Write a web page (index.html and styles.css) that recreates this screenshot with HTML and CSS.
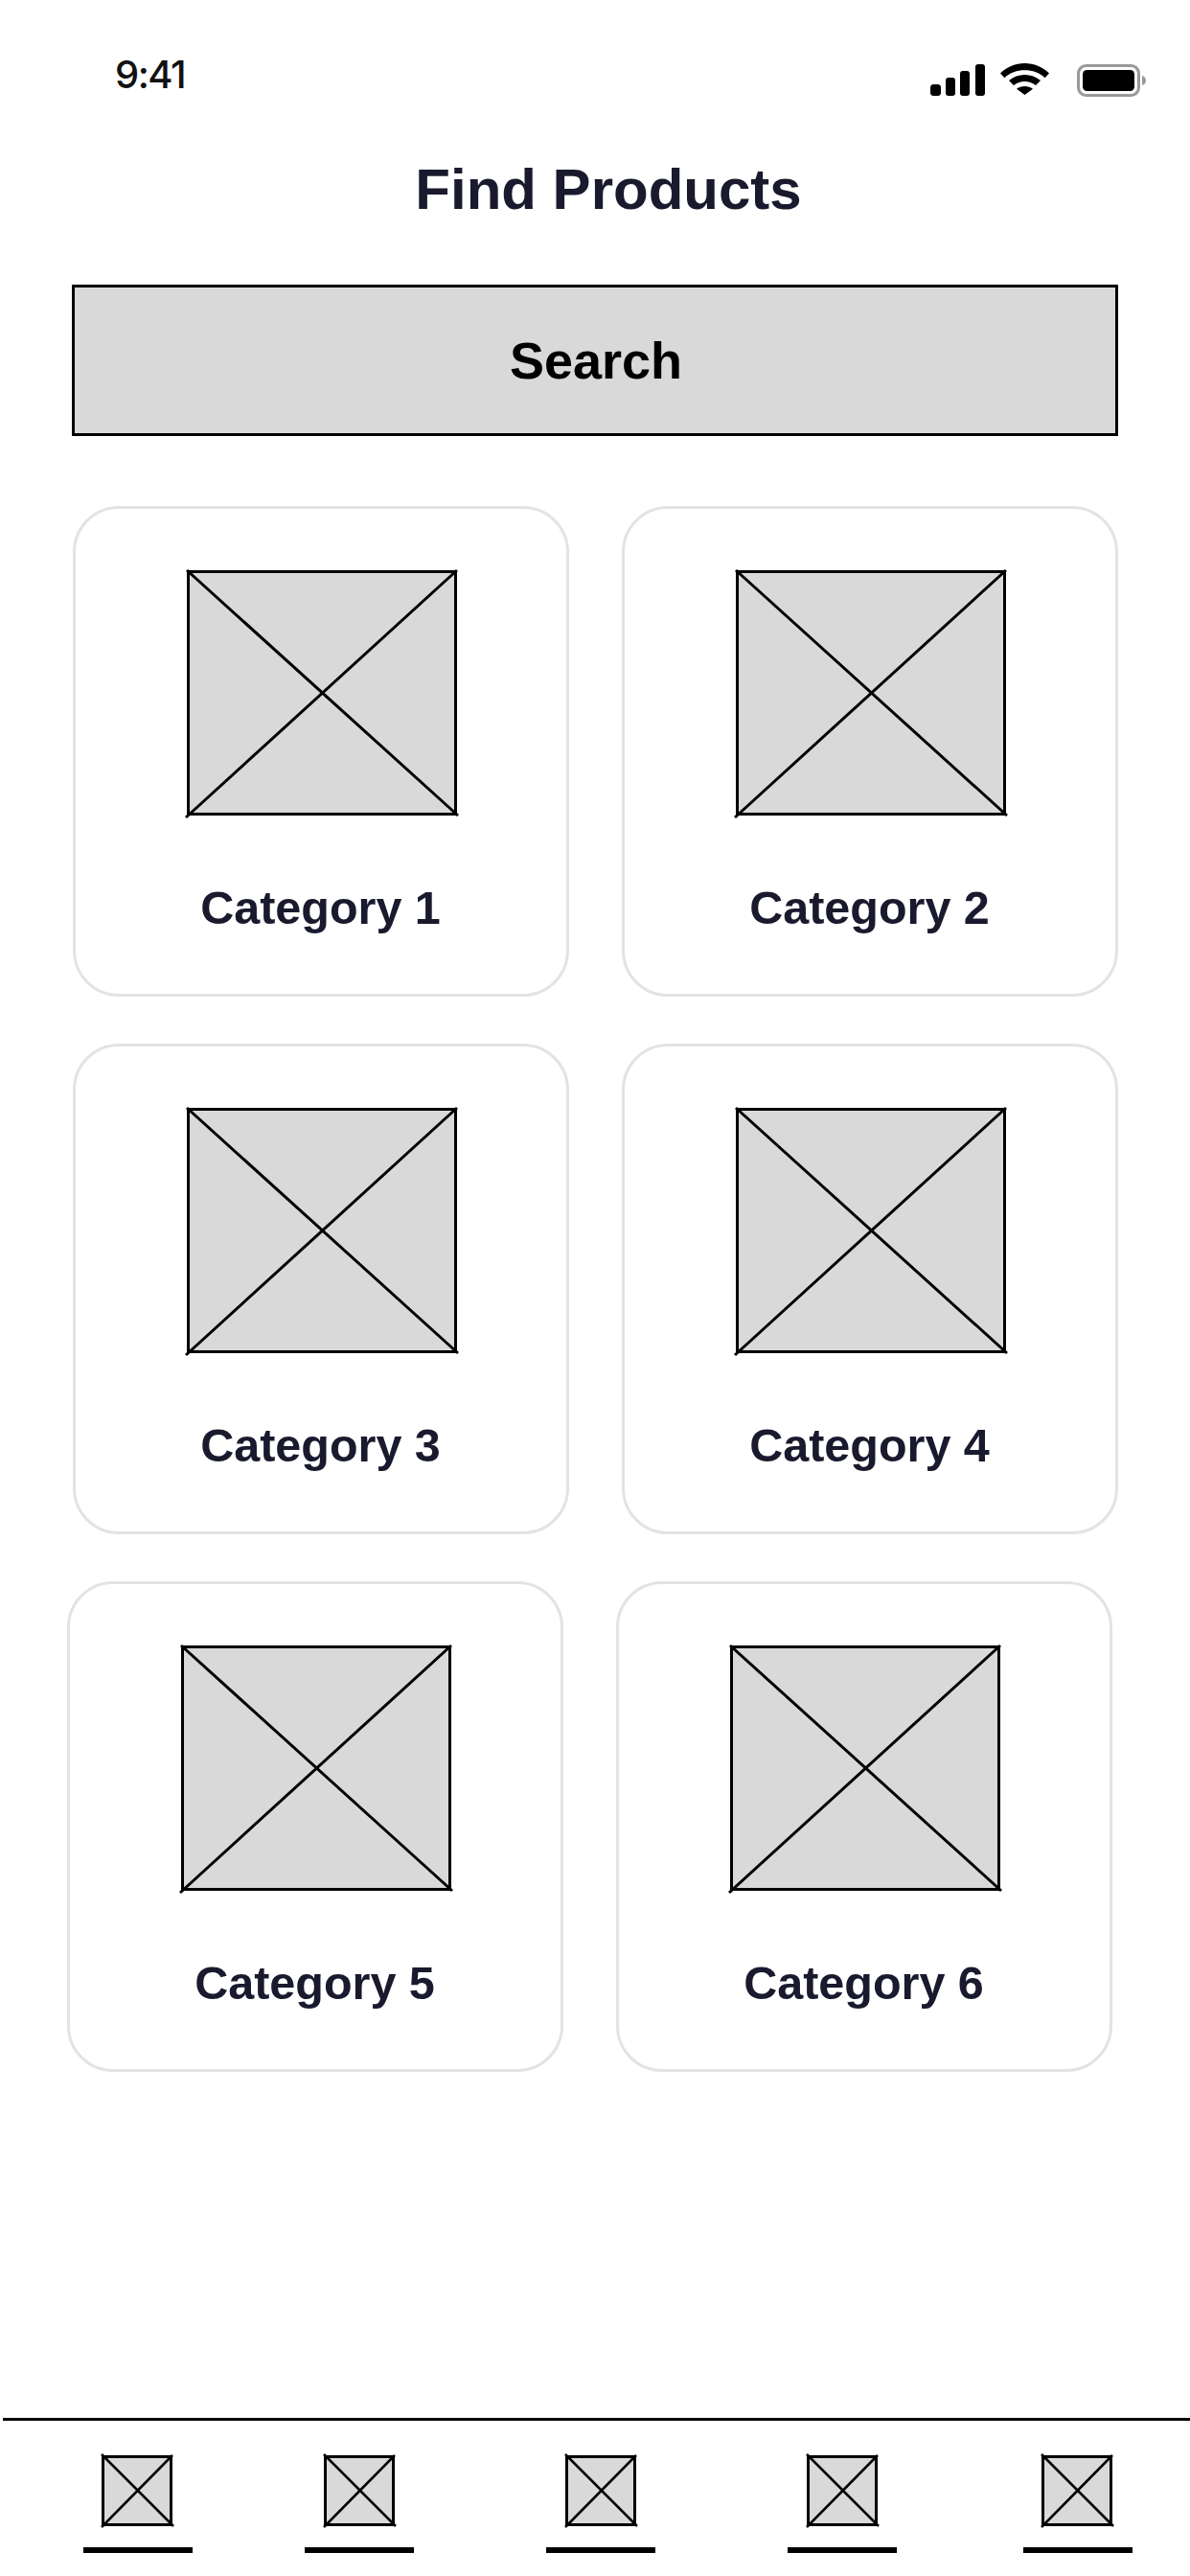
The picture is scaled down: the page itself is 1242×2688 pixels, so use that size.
FILE: index.html
```html
<!DOCTYPE html>
<html lang="en">
<head>
<meta charset="utf-8">
<title>Find Products</title>
<link rel="stylesheet" href="styles.css">
</head>
<body>
<svg class="defs" width="0" height="0" aria-hidden="true">
  <symbol id="ph" viewBox="0 0 282 256" preserveAspectRatio="none" overflow="visible">
    <rect x="1.5" y="1.5" width="279" height="253" fill="#d9d9d9" stroke="#000" stroke-width="3"/>
    <path d="M0 0L283 256M282 0L-1 258" fill="none" stroke="#000" stroke-width="3"/>
  </symbol>
  <symbol id="ph-s" viewBox="0 0 74 74" preserveAspectRatio="none" overflow="visible">
    <rect x="1.5" y="1.5" width="71" height="71" fill="#d9d9d9" stroke="#000" stroke-width="3"/>
    <path d="M0 -1L75 74M74 0L0 75" fill="none" stroke="#000" stroke-width="2.5"/>
  </symbol>
</svg>
<div class="screen">
  <header class="status">
    <span class="time">9:41</span>
    <div class="status-icons">
      <svg class="signal" width="57" height="33" viewBox="0 0 57 33"><rect x="0" y="21" width="11" height="12" rx="3.5"/><rect x="16" y="14" width="10" height="19" rx="3"/><rect x="31" y="7" width="10" height="26" rx="3"/><rect x="47" y="0" width="10" height="33" rx="3"/></svg>
      <svg class="wifi" width="51" height="33" viewBox="0 0 51 33"><path d="M25.5 0C35 0 44 3.8 51 10.5L46.6 15.2C41 9.8 33.500 7.200 25.500 7.200C17.500 7.200 10 9.800 4.400 15.200L0 10.500C7 3.800 16 0 25.500 0Z"/><path d="M25.500 12C31.500 12 37.300 14 42 18L37 23C33.500 20.300 29.500 19 25.500 19C21.500 19 17.500 20.300 14 23L9 18C13.700 14 19.500 12 25.500 12Z"/><path d="M25.500 24C28.500 24 31.500 25 34 26.800L25.500 33L17 26.800C19.500 25 22.500 24 25.500 24Z"/></svg>
      <svg class="battery" width="72" height="34" viewBox="0 0 72 34"><rect x="1.500" y="1.500" width="63" height="31" rx="8" fill="none" stroke="#999" stroke-width="3"/><rect x="6" y="6" width="54" height="22" rx="4.500"/><path d="M68 12C70.500 12.500 72 14.500 72 17C72 19.500 70.500 21.500 68 22Z" fill="#999"/></svg>
    </div>
  </header>
  <h1 class="title">Find Products</h1>
  <div class="search">Search</div>
  <main class="grid">
    <article class="card"><svg class="thumb"><use href="#ph"/></svg><h2 class="label">Category 1</h2></article>
    <article class="card"><svg class="thumb"><use href="#ph"/></svg><h2 class="label">Category 2</h2></article>
    <article class="card"><svg class="thumb"><use href="#ph"/></svg><h2 class="label">Category 3</h2></article>
    <article class="card"><svg class="thumb"><use href="#ph"/></svg><h2 class="label">Category 4</h2></article>
    <article class="card"><svg class="thumb"><use href="#ph"/></svg><h2 class="label">Category 5</h2></article>
    <article class="card"><svg class="thumb"><use href="#ph"/></svg><h2 class="label">Category 6</h2></article>
  </main>
  <nav class="nav">
    <div class="tab"><svg class="tab-icon"><use href="#ph-s"/></svg><span class="tab-bar"></span></div>
    <div class="tab"><svg class="tab-icon"><use href="#ph-s"/></svg><span class="tab-bar"></span></div>
    <div class="tab"><svg class="tab-icon"><use href="#ph-s"/></svg><span class="tab-bar"></span></div>
    <div class="tab"><svg class="tab-icon"><use href="#ph-s"/></svg><span class="tab-bar"></span></div>
    <div class="tab"><svg class="tab-icon"><use href="#ph-s"/></svg><span class="tab-bar"></span></div>
  </nav>
</div>
</body>
</html>
```
FILE: styles.css
```css
* { box-sizing: border-box; }
html, body { margin: 0; padding: 0; background: #fff; }
body { font-family: "Liberation Sans", Arial, sans-serif; }
.defs { display: block; height: 0; }
.screen { width: 1242px; height: 2688px; display: flex; flex-direction: column; overflow: hidden; }

.status { height: 100px; padding: 56px 46px 0 120px; display: flex; justify-content: space-between; align-items: flex-start; }
.time { font-family: Inter, sans-serif; font-weight: 500; font-size: 40px; line-height: 44px; letter-spacing: -1.5px; color: #111; }
.status-icons { display: flex; align-items: flex-start; margin-top: 10px; }
.signal { margin-top: 1px; }
.wifi { margin-left: 16px; }
.battery { margin-left: 29px; margin-top: 1px; }

.title { margin: 68px 0 0; font-size: 60px; line-height: 60px; font-weight: 700; text-align: center; color: #1a1a2e; padding-left: 28px; }
.search { margin: 69px 75px 0; width: 1092px; height: 158px; background: #d9d9d9; border: 3px solid #000; display: flex; align-items: center; justify-content: center; padding-left: 2px; font-size: 54px; font-weight: 700; color: #000; }

.grid { margin: 73px 76px 0; display: grid; grid-template-columns: 518px 518px; column-gap: 55px; row-gap: 49px; }
.card { height: 512px; border: 3px solid #e3e3e3; border-radius: 48px; background: #fff; display: flex; flex-direction: column; align-items: center; padding-top: 64px; }
.card:nth-child(n+5) { margin-left: -6px; margin-right: 6px; }
.thumb { width: 282px; height: 256px; overflow: visible; margin-left: 1px; }
.label { margin: 68px 0 0; padding-right: 1px; font-size: 48.5px; line-height: 56px; font-weight: 700; color: #1a1a2e; }

.nav { margin: auto 0 0 3px; height: 165px; border-top: 3px solid #000; padding: 36px 0 0 84px; display: grid; grid-template-columns: 231px 252px 252px 246px 114px; }
.tab { width: 114px; display: flex; flex-direction: column; align-items: center; }
.tab-icon { width: 74px; height: 74px; overflow: visible; }
.tab:first-child .tab-icon, .tab:last-child .tab-icon { margin-right: 2px; }
.tab-bar { display: block; width: 114px; height: 6px; background: #000; margin-top: 22px; }
```
